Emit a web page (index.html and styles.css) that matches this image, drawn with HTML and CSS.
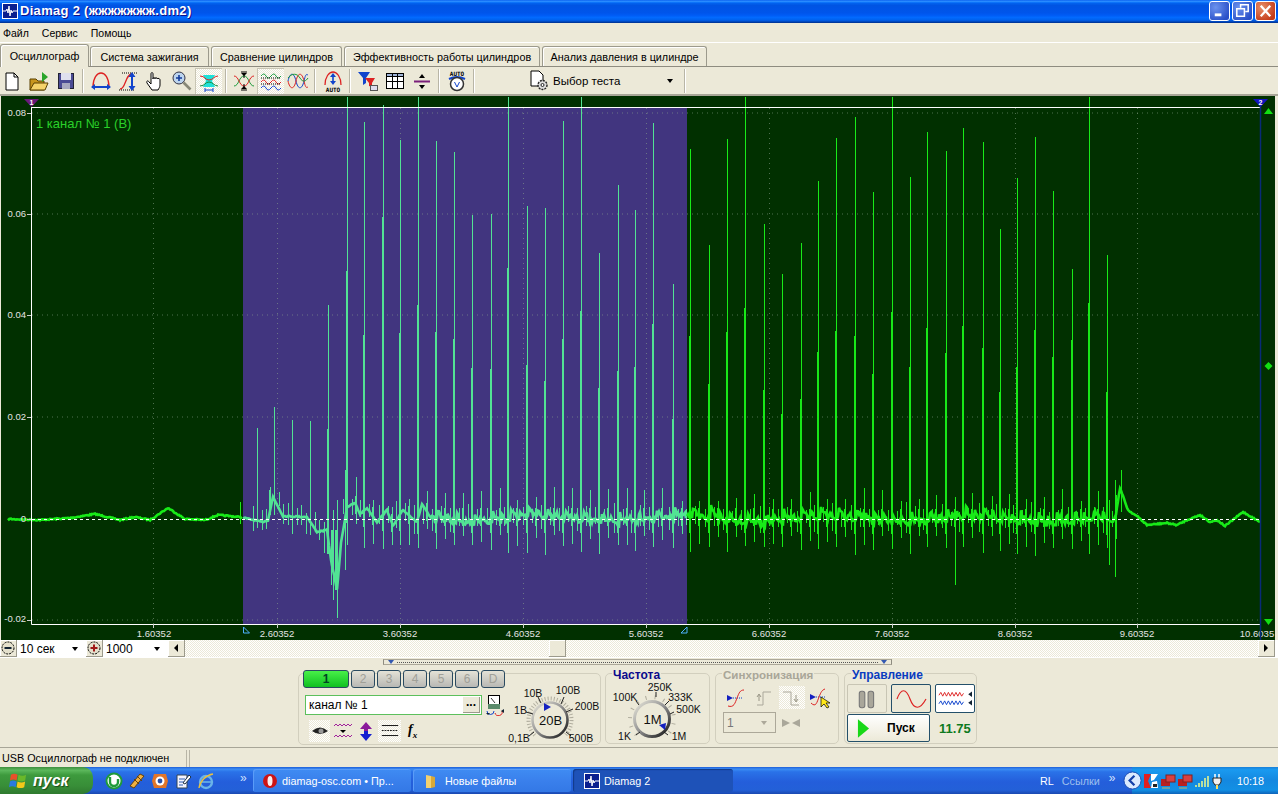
FILE: index.html
```html
<!DOCTYPE html>
<html lang="ru">
<head>
  <meta charset="UTF-8" />
  <title>Diamag 2</title>
  <link rel="stylesheet" href="styles.css">
</head>
<body>

  <!-- title bar -->
  <header class="titlebar">
    <svg class="app-icon" viewBox="0 0 16 16"><rect x="0.5" y="0.5" width="15" height="15" fill="#0a1f8f" stroke="#fff"/><path d="M1 8h3l1-2 1 4 1-7 1 10 1-6 1 3 1-2h4" fill="none" stroke="#fff"/></svg>
    <span class="title-text">Diamag 2 (жжжжжжж.dm2)</span>
    <div class="win-btns">
      <div class="win-btn"><svg viewBox="0 0 20 20"><rect x="5" y="12" width="7" height="3" fill="#fff"/></svg></div>
      <div class="win-btn"><svg viewBox="0 0 20 20"><path d="M8 6V3h8v7h-3M4 7h8v8H4z" fill="none" stroke="#fff" stroke-width="1.6"/></svg></div>
      <div class="win-btn close"><svg viewBox="0 0 20 20"><path d="M5 4l10 11M15 4L5 15" stroke="#fff" stroke-width="2.4"/></svg></div>
    </div>
  </header>

  <nav class="menu">
    <span>Файл</span>
    <span>Сервис</span>
    <span>Помощь</span>
  </nav>

  <div class="tabs">
    <div class="tab active t1">Осциллограф</div>
    <div class="tab t2">Система зажигания</div>
    <div class="tab t3">Сравнение цилиндров</div>
    <div class="tab t4">Эффективность работы цилиндров</div>
    <div class="tab t5">Анализ давления в цилиндре</div>
  </div>

  <div class="toolbar">
    <div class="tool"><svg viewBox="0 0 22 22"><path d="M5 3h8l4 4v13H5z" fill="#fff" stroke="#000"/><path d="M13 3v4h4" fill="none" stroke="#000"/></svg></div>
    <div class="tool"><svg viewBox="0 0 22 22"><path d="M2 9h6l2 2h6v9H2z" fill="#c8961e" stroke="#5a4000"/><path d="M6 13h14l-3 7H2z" fill="#f5d36a" stroke="#5a4000"/><path d="M14 2l6 5-6 5z" fill="#2aa52a"/></svg></div>
    <div class="tool"><svg viewBox="0 0 22 22"><rect x="3.500" y="3.500" width="15" height="15" fill="#4a4a94" stroke="#223"/><rect x="6" y="3" width="10" height="7" fill="#dfe0ee"/><rect x="7" y="13" width="8" height="6" fill="#a8a8c0"/></svg></div>
    <div class="sep"></div>
    <div class="tool"><svg viewBox="0 0 22 22"><path d="M3 17C3 8 7 3 11 3s8 5 8 14" fill="none" stroke="#d22" stroke-width="1.300"/><path d="M2 17h18" stroke="#14c" stroke-width="2"/><path d="M1 17l4-3v6zM21 17l-4-3v6z" fill="#14c"/></svg></div>
    <div class="tool"><svg viewBox="0 0 22 22"><path d="M3 19c6 0 5-15 12-15" fill="none" stroke="#d22" stroke-width="1.300"/><path d="M5 3h15M2 20h15" stroke="#000" stroke-dasharray="1 1"/><path d="M15 5v13" stroke="#14c" stroke-width="2"/><path d="M15 2l-3.500 5h7zM15 21l-3.500-5h7z" fill="#14c"/></svg></div>
    <div class="tool"><svg viewBox="0 0 22 22"><path d="M8 20l-5-7c-1-2 1-3 2-1l2 2V4c0-2 2-2 2 0v5c0-2 2-2 2 0 0-2 2-2 2 0 0-1 3-1 3 1v5c0 2-1 3-2 5z" fill="#fff" stroke="#000"/></svg></div>
    <div class="tool"><svg viewBox="0 0 22 22"><circle cx="8" cy="8" r="6" fill="#bcd4ee" stroke="#334"/><path d="M5 8h6M8 5v6" stroke="#123a9a" stroke-width="1.600"/><path d="M12.500 12.500l7 7" stroke="#887" stroke-width="2.600"/></svg></div>
    <div class="tool pressed"><svg viewBox="0 0 22 22"><path d="M5 5h12l-3 6 3 6H5l3-6z" fill="#1fe0d8"/><path d="M2 6c5 0 5 4 9 4s5-4 9-4" fill="none" stroke="#d22"/><path d="M2 16c5 0 5-4 9-4s5 4 9 4" fill="none" stroke="#1a8a3a"/><path d="M7 20h8M7 18v4M15 18v4" stroke="#14c"/></svg></div>
    <div class="sep"></div>
    <div class="tool"><svg viewBox="0 0 22 22"><path d="M1 16c5 0 5-10 10-10s5 10 10 10" fill="none" stroke="#1a9a3a"/><path d="M1 6c5 0 5 10 10 10s5-10 10-10" fill="none" stroke="#d22"/><path d="M11 8V3M8 2h6M11 14v5M8 20h6" stroke="#000"/><path d="M8 3h6l-3 3zM8 19h6l-3-3z"/></svg></div>
    <div class="tool pressed"><svg viewBox="0 0 22 22"><path d="M1 6q3-4 5 0t5 0 5 0 5 0" fill="none" stroke="#1a9a3a"/><path d="M1 8h20" stroke="#000" stroke-dasharray="1 1"/><path d="M1 12q3-4 5 0t5 0 5 0 5 0" fill="none" stroke="#d22"/><path d="M1 14h20" stroke="#000" stroke-dasharray="1 1"/><path d="M1 18q3-4 5 0t5 0 5 0 5 0" fill="none" stroke="#14c"/></svg></div>
    <div class="tool"><svg viewBox="0 0 22 22"><path d="M1 11c2-9 6-9 8 0s6 9 8 0 3-6 4-6" fill="none" stroke="#14c"/><path d="M1 11c2 9 6 9 8 0s6-9 8 0 3 6 4 6" fill="none" stroke="#d22"/><path d="M1 8c4-5 9-5 12 0s6 3 8 0" fill="none" stroke="#1a9a3a"/></svg></div>
    <div class="sep"></div>
    <div class="tool"><svg viewBox="0 0 22 22"><path d="M3 15C3 7 7 2 11 2s8 5 8 13" fill="none" stroke="#d22" stroke-width="1.300"/><path d="M11 6v7" stroke="#14c" stroke-width="1.600"/><path d="M11 3L8 7h6zM11 15l-3-4h6z" fill="#14c"/><text class="mini" x="11" y="21.500">AUTO</text></svg></div>
    <div class="sep"></div>
    <div class="tool"><svg viewBox="0 0 22 22"><path d="M1 2h12l-4 6v5l-3 2V8z" fill="#14c"/><path d="M8 8h10l-3 5v4l-3-1v-3z" fill="#d22"/><rect x="13.500" y="15.500" width="7" height="5" fill="#dde" stroke="#555"/></svg></div>
    <div class="tool"><svg viewBox="0 0 22 22"><rect x="2.500" y="3.500" width="17" height="15" fill="#fff" stroke="#000"/><rect x="2.500" y="3.500" width="17" height="3" fill="#9fb4d8" stroke="#000"/><path d="M8.500 4v14M13.500 4v14M3 11.500h16" stroke="#000"/></svg></div>
    <div class="tool"><svg viewBox="0 0 22 22"><path d="M3 11.500h16" stroke="#7a1f7a" stroke-width="2"/><path d="M11 4l-3 4h6zM11 19l-3-4h6z"/></svg></div>
    <div class="sep"></div>
    <div class="tool"><svg viewBox="0 0 22 22"><text class="mini" x="11" y="5.500">AUTO</text><path d="M3 9q8-4 16 0" fill="none" stroke="#14c" stroke-width="2"/><circle cx="11" cy="14" r="6.500" fill="#fff" stroke="#333" stroke-width="1.500"/><path d="M8.500 12l2.500 5 2.500-5" fill="none" stroke="#14c"/></svg></div>
    <div class="sep"></div>
    <div class="test-select">
      <svg class="test-icon" viewBox="0 0 20 22"><path d="M2 1h8l4 4v11H2z" fill="#fff" stroke="#000"/><circle cx="13.500" cy="15" r="4.500" fill="#ddd" stroke="#222" stroke-width="1.400" stroke-dasharray="2 1"/><circle cx="13.500" cy="15" r="1.500" fill="#fff" stroke="#222"/></svg>
      <span class="test-name">Выбор теста</span>
      <i class="caret"></i>
    </div>
    <div class="sep"></div>
  </div>

  <!-- oscilloscope -->
  <svg class="scope" id="scope" viewBox="0 96 1278 544">
    <rect x="1" y="96" width="1274" height="544" fill="#013000"/>
    <rect x="243" y="108" width="444" height="516" fill="#41357f"/>
    <g class="grid">
      <path d="M32 113H1260M32 214H1260M32 315H1260M32 417H1260M32 620H1260"/>
      <path d="M153.500 108V624M277.500 108V624M400.500 108V624M523.500 108V624M646.500 108V624M769.500 108V624M892.500 108V624M1015.500 108V624M1137.500 108V624"/>
    </g>
    <g id="wave"></g>
    <path class="zero" d="M32 519.500H1260"/>
    <path class="axis" d="M31.500 107V624.500H1260M31 107.500H1260"/>
    <path class="ticks" d="M27 113.500h4M27 214.500h4M27 315.500h4M27 417.500h4M27 519.500h4M27 620.500h4M153.500 624v4M277.500 624v4M400.500 624v4M523.500 624v4M646.500 624v4M769.500 624v4M892.500 624v4M1015.500 624v4M1137.500 624v4M1260.500 624v4"/>
    <g class="ylabels">
      <text x="26" y="116">0.08</text>
      <text x="26" y="217">0.06</text>
      <text x="26" y="318">0.04</text>
      <text x="26" y="420">0.02</text>
      <text x="26" y="522">0</text>
      <text x="26" y="622">-0.02</text>
    </g>
    <g class="xlabels">
      <text x="154" y="637">1.60352</text>
      <text x="277" y="637">2.60352</text>
      <text x="400" y="637">3.60352</text>
      <text x="523" y="637">4.60352</text>
      <text x="646" y="637">5.60352</text>
      <text x="769" y="637">6.60352</text>
      <text x="892" y="637">7.60352</text>
      <text x="1015" y="637">8.60352</text>
      <text x="1137" y="637">9.60352</text>
      <text x="1257" y="637">10.6035</text>
    </g>
    <text class="chan-label" x="36" y="128">1 канал № 1 (В)</text>
    <path d="M1260.500 100V640" stroke="#0a2a78" stroke-width="1.500"/>
    <path d="M24 99h15l-7.500 8z" fill="#6a1a7a"/>
    <text class="marker" x="31.500" y="105">1</text>
    <path d="M1253 99h15l-7.500 8z" fill="#1414c0"/>
    <text class="marker" x="1260.500" y="105">2</text>
    <path d="M1268.500 108l4.500 6h-9zM1268.500 625l4.500-6h-9zM1268.500 362l4 4-4 4-4-4z" fill="#12e012"/>
    <path d="M243.500 627v6h6zM687 627v6h-6z" fill="none" stroke="#4fb0ff"/>
  </svg>

  <div class="scrollrow">
    <div class="round-btn"><svg viewBox="0 0 16 16"><circle cx="8" cy="8" r="6" fill="#e4e0cc" stroke="#000" stroke-dasharray="2 1"/><path d="M4.500 8h7" stroke="#123" stroke-width="2"/></svg></div>
    <div class="combo c-time"><span>10 сек</span><i class="caret"></i></div>
    <div class="round-btn"><svg viewBox="0 0 16 16"><circle cx="8" cy="8" r="6" fill="#e4e0cc" stroke="#000" stroke-dasharray="2 1"/><path d="M4.500 8h7M8 4.500v7" stroke="#a01818" stroke-width="2"/></svg></div>
    <div class="combo c-points"><span>1000</span><i class="caret"></i></div>
    <div class="sb-btn"><i class="arrow-left"></i></div>
    <div class="sb-track"><div class="sb-thumb"></div></div>
    <div class="sb-btn"><i class="arrow-right"></i></div>
  </div>

  <section class="controls">
    <div class="splitter"><i class="down-tri"></i><span class="dots"></span><i class="down-tri"></i></div>
    <div class="groups">

      <div class="group g-channel">
        <div class="chan-left">
          <div class="chan-tabs">
            <div class="chan on">1</div>
            <div class="chan">2</div>
            <div class="chan">3</div>
            <div class="chan">4</div>
            <div class="chan">5</div>
            <div class="chan">6</div>
            <div class="chan">D</div>
          </div>
          <div class="chan-name">
            <div class="name-input"><span>канал № 1</span><div class="dots-btn">...</div></div>
            <svg class="meter" viewBox="0 0 20 22"><rect x="3.500" y="1.500" width="11" height="13" fill="#fff" stroke="#000"/><rect x="3" y="10" width="12" height="5" fill="#5a8a6a"/><path d="M6 4l4 5" stroke="#333"/><path d="M2 17a3 3 0 0 0 7 0" fill="none" stroke="#14c"/><path d="M10 19a3 3 0 0 0 7-2" fill="none" stroke="#d22"/><path d="M1 19h4l-2 2zM16 17l3-2v4z" fill="#123"/></svg>
          </div>
          <div class="chan-icons">
            <div class="c-icon sel"><svg viewBox="0 0 20 20"><path d="M2 10q8-7 16 0-8 6-16 0z" fill="#222"/><circle cx="11" cy="10" r="2.500" fill="#999"/></svg></div>
            <div class="c-icon"><svg viewBox="0 0 20 20"><path d="M1 5l2-2 2 2 2-2 2 2 2-2 2 2 2-2 2 2 2-2" fill="none" stroke="#a0209a"/><path d="M7 9h6l-3 3z"/><path d="M1 16l2-2 2 2 2-2 2 2 2-2 2 2 2-2 2 2 2-2" fill="none" stroke="#a0209a"/></svg></div>
            <div class="c-icon"><svg viewBox="0 0 20 20"><path d="M10 1l6 7h-4v2H8V8H4z" fill="#8a1a9a"/><path d="M10 20l6-7h-4v-3H8v3H4z" fill="#1420d0"/></svg></div>
            <div class="c-icon sel wide"><svg viewBox="0 0 22 20"><path d="M2 4h18M2 15h18" stroke="#000"/><path d="M2 9.500h18" stroke="#000" stroke-dasharray="2 1"/></svg></div>
            <span class="fx">f<sub>x</sub></span>
          </div>
        </div>
        <svg class="dial d-volt" viewBox="505 676 95 69">
          <path class="dial-ticks" d="M534.800 735.200A21.500 21.500 0 1 1 565.200 735.200"/>
          <circle cx="550" cy="720" r="17.500" fill="none" stroke="url(#ringGrad)" stroke-width="2.600"/>
          <path class="major" d="M541 703l-3-6M561 704l3-7M566 712l7-3M533 714l-7-2M534 732l-5 4M566 732l5 4"/>
          <path d="M544 703l7 4-7 4z" fill="#1420c0"/>
          <text class="dial-val" x="550.500" y="725">20В</text>
          <text x="533" y="697">10В</text>
          <text x="568" y="694">100В</text>
          <text x="587" y="710">200В</text>
          <text x="520.500" y="714">1В</text>
          <text x="519" y="742">0,1В</text>
          <text x="581" y="742">500В</text>
        </svg>
      </div>

      <fieldset class="group g-freq">
        <legend class="navy">Частота</legend>
        <svg class="dial d-freq" viewBox="607 680 100 64">
          <path class="dial-ticks sparse" d="M637.400 735.600A22 22 0 1 1 668.600 735.600"/>
          <circle cx="653" cy="720" r="17.500" fill="none" stroke="url(#ringGrad)" stroke-width="3"/>
          <path class="major" d="M640 706l-3-4M657 698v-5M666 706l4-4M671 715l4-2M641 733l-4 3M665 733l4 3"/>
          <path d="M660 726l7-2-1 7z" fill="#1420c0"/>
          <text class="dial-val" x="653.500" y="725">1M</text>
          <text x="626" y="702">100K</text>
          <text x="661" y="692">250K</text>
          <text x="681.500" y="702">333K</text>
          <text x="689.500" y="714">500K</text>
          <text x="625.500" y="741">1K</text>
          <text x="680" y="741">1M</text>
        </svg>
      </fieldset>

      <fieldset class="group g-sync">
        <legend class="muted">Синхронизация</legend>
        <div class="sync-row">
          <div class="s-icon"><svg viewBox="0 0 22 22"><path d="M2 8l6 3-6 3z" fill="#1420c0"/><path d="M8 11h10" stroke="#14c" stroke-dasharray="1 1"/><path d="M3 19c6 2 7-3 9-8s3-8 7-8" fill="none" stroke="#d22"/></svg></div>
          <div class="s-icon"><svg viewBox="0 0 22 22"><path d="M4 18h6V5h8" fill="none" stroke="#aaa79a"/><path d="M6 14V8M4 10l2-3 2 3" fill="none" stroke="#999686"/></svg></div>
          <div class="s-icon pressed"><svg viewBox="0 0 22 22"><path d="M2 5h8v13h8" fill="none" stroke="#aaa79a"/><path d="M15 8v6M13 12l2 3 2-3" fill="none" stroke="#999686"/></svg></div>
          <div class="s-icon"><svg viewBox="0 0 22 22"><path d="M1 7l6 3-6 3z" fill="#1420c0"/><path d="M7 10h10" stroke="#14c" stroke-dasharray="1 1"/><path d="M2 16c5 5 6-1 8-6s3-7 6-8" fill="none" stroke="#d22"/><path d="M12 10v10l3-3 3 4 2-1-3-4h4z" fill="#ffe81a" stroke="#000" stroke-width=".7"/></svg></div>
        </div>
        <div class="sync-row second">
          <div class="sync-combo"><span>1</span><i class="caret gray"></i></div>
          <svg class="sync-join" viewBox="0 0 20 10"><path d="M1 1l8 4-8 4zM19 1l-8 4 8 4z" fill="#aaa79a"/></svg>
        </div>
      </fieldset>

      <fieldset class="group g-run">
        <legend class="blue">Управление</legend>
        <div class="run-row">
          <div class="run-btn flat"><svg viewBox="0 0 20 20"><rect x="3" y="3" width="5" height="15" rx="2" fill="#a9a69a" stroke="#777"/><rect x="11" y="3" width="5" height="15" rx="2" fill="#a9a69a" stroke="#777"/></svg></div>
          <div class="run-btn"><svg viewBox="0 0 34 22"><path d="M2 11C6 0 11 0 15 11s10 11 16 0" fill="none" stroke="#d22" stroke-width="1.200" transform="translate(1)"/></svg></div>
          <div class="run-btn on"><svg viewBox="0 0 36 22"><path d="M1 7l2-3 2 4 2-4 2 4 2-4 2 4 2-4 2 4 2-4 2 4 2-4 2 4 2-3" fill="none" stroke="#d22"/><path d="M1 16l2-3 2 4 2-4 2 4 2-4 2 4 2-4 2 4 2-4 2 4 2-4 2 4 2-3" fill="none" stroke="#14c"/><path d="M36 3l-4 3 4 3zM36 12l-4 3 4 3z" fill="#123"/></svg></div>
        </div>
        <div class="run-row second">
          <div class="start-btn"><svg viewBox="0 0 14 22"><path d="M1 1l12 10L1 21z" fill="#18d818"/></svg><span>Пуск</span></div>
          <span class="volt">11.75</span>
        </div>
      </fieldset>
    </div>
    <!-- shared gradient for dial rings -->
    <svg class="defs"><defs><linearGradient id="ringGrad" x1="0" y1="0" x2="1" y2="1"><stop offset="0" stop-color="#e8e6da"/><stop offset=".45" stop-color="#999"/><stop offset="1" stop-color="#111"/></linearGradient></defs></svg>
  </section>

  <footer class="statusbar">
    <div class="status-main">USB Осциллограф не подключен</div>
    <div class="status-rest"></div>
  </footer>

  <div class="taskbar">
    <div class="start">
      <svg class="flag" viewBox="0 0 20 20"><path d="M2 4q4-2 7 0l-1 6q-3-2-7 0z" fill="#e8502a"/><path d="M10 4q4 2 8 0l-1 6q-4 2-8 0z" fill="#6ab82a"/><path d="M1 11q3-2 7 0l-1 6q-4-2-7 0z" fill="#2a7ae0"/><path d="M9 11q4 2 8 0l-1 6q-4 2-8 0z" fill="#f4c81a"/></svg>
      <span>пуск</span>
    </div>
    <div class="quick">
      <svg viewBox="0 0 18 18"><circle cx="9" cy="9" r="7.500" fill="#fff" stroke="#1f9a3a" stroke-width="2"/><path d="M5 5v5a4 4 0 0 0 8 0V7" fill="none" stroke="#1f9a3a" stroke-width="2.400"/></svg>
      <svg viewBox="0 0 18 18"><path d="M2 14L12 2l4 2L6 16z" fill="#f0b040" stroke="#604010"/><path d="M6 7l5 5M9 4l5 5" stroke="#604010"/></svg>
      <svg viewBox="0 0 18 18"><path d="M3 2h12l2 7-2 7H3L1 9z" fill="#e0752a"/><circle cx="9" cy="9" r="4.500" fill="#fff"/><circle cx="9" cy="9" r="2.400" fill="#2a50a8"/></svg>
      <svg viewBox="0 0 18 18"><path d="M3 3h10v13H3z" fill="#f4f4ff" stroke="#345"/><path d="M5 7h6M5 10h6M5 13h4" stroke="#2a5ab0"/><path d="M9 11l6-8 2 2-6 7z" fill="#fff" stroke="#234"/></svg>
      <svg viewBox="0 0 18 18"><circle cx="9" cy="10" r="6" fill="none" stroke="#6ab4e8" stroke-width="2.400"/><path d="M4 10h10" stroke="#6ab4e8" stroke-width="1.600"/><path d="M2 16C3 9 9 3 16 2" fill="none" stroke="#e8c040" stroke-width="1.400"/></svg>
    </div>
    <span class="more m1">»</span>
    <div class="task t-opera">
      <svg viewBox="0 0 16 16"><circle cx="8" cy="8" r="7" fill="#cc1414"/><ellipse cx="8" cy="8" rx="2.500" ry="5" fill="#fbeeee"/></svg>
      <span>diamag-osc.com • Пр...</span>
    </div>
    <div class="task t-folder">
      <svg viewBox="0 0 16 16"><path d="M3 2l5 1v12H3z" fill="#f2d070"/><path d="M8 3l4 1v10l-4 1z" fill="#d8a838"/></svg>
      <span>Новые файлы</span>
    </div>
    <div class="task t-app current">
      <svg viewBox="0 0 16 16"><rect x="0.500" y="0.500" width="15" height="15" fill="#0a1f8f" stroke="#fff"/><path d="M1 8h3l1-2 1 4 1-7 1 10 1-6 1 3 1-2h4" fill="none" stroke="#fff"/></svg>
      <span>Diamag 2</span>
    </div>
    <div class="links">
      <span class="lang">RL</span>
      <span class="link-txt">Ссылки</span>
      <span class="more">»</span>
    </div>
    <div class="tray">
      <svg class="tray-back" viewBox="0 0 20 20"><circle cx="10" cy="10" r="9" fill="#dbeafe" stroke="#1a4ab0"/><path d="M12 5l-5 5 5 5" fill="none" stroke="#1440a8" stroke-width="2.400"/></svg>
      <svg viewBox="0 0 16 16"><path d="M1 1h7l-3 7 3 7H1z" fill="#e02020"/><path d="M8 1h7l-4 6-3 1zM9 9l5-1 1 7H8z" fill="#fff"/><path d="M10 11h4v3h-4z" fill="#222"/></svg>
      <svg viewBox="0 0 16 16"><rect x="1" y="6" width="9" height="7" fill="#b82020"/><rect x="6" y="2" width="9" height="7" fill="#d84040" stroke="#802020"/><path d="M2 15h8" stroke="#c8b060"/></svg>
      <svg viewBox="0 0 16 16"><rect x="1" y="6" width="9" height="7" fill="#b82020"/><rect x="6" y="2" width="9" height="7" fill="#d84040" stroke="#802020"/><path d="M2 15h8" stroke="#c8b060"/></svg>
      <svg viewBox="0 0 16 16"><path d="M2 14v-2M5 14v-4M8 14V8M11 14V5M14 14V3" stroke-width="2" stroke="#b8e0a0"/></svg>
      <svg viewBox="0 0 16 16"><path d="M4 1v4M8 1v4" stroke="#fff" stroke-width="1.500"/><path d="M2 5h8v4l-2 3H4L2 9z" fill="#f0f0f0" stroke="#222"/><path d="M6 12v4" stroke="#ffe060" stroke-width="2"/></svg>
      <span class="clock">10:18</span>
    </div>
  </div>

  <script src="plot.js"></script>
</body>
</html>
```

FILE: styles.css
```css
* {
  box-sizing: border-box;
}

body {
  margin: 0;
  width: 1278px;
  height: 794px;
  overflow: hidden;
  display: flex;
  flex-direction: column;
  background: #ece9d8;
  color: #000;
  font-family: "Liberation Sans", Arial, sans-serif;
  font-size: 10.800px;
}

svg {
  display: block;
}

/* title bar */
.titlebar {
  height: 23px;
  flex: none;
  display: flex;
  align-items: center;
  padding: 0 2px 2px 2px;
  color: #fff;
  background: linear-gradient(#0058ee 0, #3593ff 5%, #127dff 9%, #0262ee 14%, #0054e3 24%, #0055eb 56%, #005bf5 66%, #026afe 76%, #0062ef 86%, #0052d6 92%, #0040ab 95%, #003092 100%);
}

.app-icon {
  width: 16px;
  height: 16px;
}

.title-text {
  margin-left: 2px;
  font-size: 13px;
  font-weight: bold;
  letter-spacing: 0.3px;
  text-shadow: 1px 1px 0 #0f1089;
}

.win-btns {
  margin-left: auto;
  display: flex;
  gap: 2px;
  margin-top: 1px;
}

.win-btn {
  width: 21px;
  height: 20px;
  border: 1px solid #fff;
  border-radius: 3px;
  background: radial-gradient(circle at 30% 30%, #6b92ee, #2a50c8 80%);
}

.win-btn.close {
  background: radial-gradient(circle at 30% 30%, #e8906a, #c43a18 80%);
}

/* menu and tabs */
.menu {
  height: 20px;
  flex: none;
  display: flex;
  align-items: center;
  gap: 13px;
  padding-left: 3px;
  border-bottom: 1px solid #fff;
  font-size: 10.500px;
}

.tabs {
  height: 24px;
  flex: none;
  display: flex;
  align-items: flex-end;
  border-bottom: 1px solid #8e8c80;
}

.tab {
  height: 20px;
  margin-left: 2px;
  border: 1px solid #9c9a8c;
  border-bottom: none;
  border-radius: 3px 3px 0 0;
  background: #ece9d8;
  box-shadow: inset 1px 1px 0 #fff;
  display: flex;
  align-items: center;
  justify-content: center;
  white-space: nowrap;
}

.tab.active {
  height: 23px;
  margin-left: 0;
  margin-bottom: -1px;
  position: relative;
}

.t1 { width: 89px; }
.t2 { width: 119px; margin-left: 1px; }
.t3 { width: 131px; }
.t4 { width: 196px; }
.t5 { width: 165px; }

/* toolbar */
.toolbar {
  height: 29px;
  flex: none;
  display: flex;
  align-items: center;
  padding-left: 0;
  border-bottom: 2px solid #a8a698;
}

.tool {
  width: 27px;
  height: 26px;
  display: flex;
  align-items: center;
  justify-content: center;
}

.tool:first-child {
  margin-left: -2px;
}

.tool svg {
  width: 22px;
  height: 22px;
}

.tool.pressed {
  background: repeating-conic-gradient(#ece9d8 0 25%, #fff 0 50%) 0 0/2px 2px;
  box-shadow: inset 1px 1px 0 #c8c5b4;
}

.sep {
  width: 2px;
  height: 24px;
  margin: 0 3px 0 3px;
  border-left: 1px solid #b8b5a6;
  border-right: 1px solid #fff;
}

.mini {
  font-family: "DejaVu Sans Mono", monospace;
  font-size: 6px;
  font-weight: bold;
  text-anchor: middle;
}

.test-select {
  width: 152px;
  margin-left: 51px;
  display: flex;
  align-items: center;
}

.test-icon {
  width: 20px;
  height: 22px;
}

.test-name {
  margin-left: 4px;
  font-size: 11.500px;
}

.caret {
  width: 0;
  height: 0;
  border: 3px solid transparent;
  border-top: 4px solid #000;
  border-bottom: none;
}

.test-select .caret {
  margin-left: auto;
  margin-right: 8px;
}

/* scope */
.scope {
  width: 1278px;
  height: 544px;
  flex: none;
}

.grid path {
  fill: none;
  stroke: #8ea88e;
  stroke-opacity: 0.55;
  stroke-dasharray: 1 4;
}

.zero {
  fill: none;
  stroke: #fff;
  stroke-dasharray: 3 3;
}

.axis {
  fill: none;
  stroke: #fff;
}

.ticks {
  fill: none;
  stroke: #ccc;
}

.ylabels text {
  fill: #e4e4e4;
  font-size: 9.500px;
  text-anchor: end;
}

.xlabels text {
  fill: #e4e4e4;
  font-size: 9.500px;
  text-anchor: middle;
}

.chan-label {
  fill: #2ad02a;
  font-size: 13px;
}

.marker {
  fill: #fff;
  font-size: 7px;
  font-weight: bold;
  text-anchor: middle;
}

/* scroll row */
.scrollrow {
  height: 18px;
  flex: none;
  display: flex;
  background: #fff;
  border-bottom: 1px solid #fff;
}

.round-btn {
  width: 17px;
  height: 17px;
  background: #ece9d8;
  border-right: 1px solid #9c9a8c;
  border-bottom: 1px solid #9c9a8c;
  box-shadow: inset 1px 1px 0 #fff;
}

.combo {
  height: 17px;
  display: flex;
  align-items: center;
  padding: 0 8px 0 3px;
  font-size: 12px;
}

.combo .caret {
  margin-left: auto;
}

.c-time { width: 69px; }
.c-points { width: 65px; }

.sb-btn {
  width: 17px;
  height: 17px;
  flex: none;
  display: flex;
  align-items: center;
  justify-content: center;
  background: #ece9d8;
  border-right: 1px solid #9c9a8c;
  border-bottom: 1px solid #9c9a8c;
  box-shadow: inset 1px 1px 0 #fff;
}

.arrow-left {
  border: 4px solid transparent;
  border-right: 4px solid #000;
  border-left: none;
}

.arrow-right {
  border: 4px solid transparent;
  border-left: 4px solid #000;
  border-right: none;
}

.sb-track {
  width: 1073px;
  height: 17px;
  flex: none;
  background: repeating-conic-gradient(#ece9d8 0 25%, #fff 0 50%) 0 0/2px 2px;
}

.sb-thumb {
  width: 17px;
  height: 17px;
  margin-left: 364px;
  background: #ece9d8;
  border-right: 1px solid #9c9a8c;
  border-bottom: 1px solid #9c9a8c;
  box-shadow: inset 1px 1px 0 #fff;
}

/* bottom controls */
.controls {
  height: 89px;
  flex: none;
  padding-top: 1px;
}

.splitter {
  width: 509px;
  height: 6px;
  margin-left: 383px;
  display: flex;
  align-items: center;
  padding: 0 4px;
  border: 1px solid #aca899;
  border-left-color: #8e8c80;
  border-right-color: #8e8c80;
}

.dots {
  flex: 1;
  margin: 0 3px;
  border-top: 1px dotted #555;
}

.down-tri {
  border: 3px solid transparent;
  border-top: 4px solid #3358b0;
  border-bottom: none;
}

.groups {
  display: flex;
  gap: 4px;
  padding-left: 298px;
  margin-top: 2px;
  align-items: flex-start;
}

.group {
  margin: 0;
  padding: 0;
  border: 1px solid #d2cfbe;
  border-radius: 5px;
  min-width: 0;
}

fieldset.group {
  height: 77px;
  margin-top: 0;
}

legend {
  padding: 0 1px;
  margin-left: 6px;
  font-size: 12px;
  font-weight: bold;
  line-height: 12px;
  transform: translateY(2px);
}

.navy { color: #0a0a8c; }
.blue { color: #0a3cc0; }
.muted { color: #a9a698; font-size: 11.600px; }

.g-channel {
  width: 303px;
  height: 72px;
  margin-top: 6px;
  display: flex;
}

.chan-left {
  width: 206px;
  flex: none;
  margin-top: -4px;
  padding-left: 4px;
}

.chan-tabs {
  display: flex;
  gap: 2px;
}

.chan {
  width: 25px;
  height: 18px;
  border: 1px solid #2a4a60;
  border-radius: 3px;
  background: linear-gradient(#e4e2d6, #b8b8b4);
  color: #a0a098;
  font-size: 12px;
  text-align: center;
  line-height: 16px;
}

.chan.on {
  width: 48px;
  background: linear-gradient(#48f048, #10c020);
  color: #042;
  font-weight: bold;
}

.chan-name {
  display: flex;
  align-items: center;
  margin-top: 6px;
  padding-left: 2px;
}

.name-input {
  width: 177px;
  height: 20px;
  flex: none;
  background: #fff;
  border: 1px solid #5cc05c;
  display: flex;
  align-items: center;
  padding-left: 3px;
  font-size: 12px;
}

.dots-btn {
  width: 17px;
  height: 16px;
  margin-left: auto;
  margin-right: 1px;
  background: #ece9d8;
  border-right: 1px solid #9c9a8c;
  border-bottom: 1px solid #9c9a8c;
  font-weight: bold;
  line-height: 10px;
  text-align: center;
}

.meter {
  width: 20px;
  height: 22px;
  flex: none;
  margin-left: 3px;
}

.chan-icons {
  display: flex;
  align-items: center;
  gap: 2px;
  margin-top: 4px;
  padding-left: 6px;
}

.c-icon {
  width: 21px;
  height: 22px;
  display: flex;
  align-items: center;
  justify-content: center;
}

.c-icon svg {
  width: 20px;
  height: 20px;
}

.c-icon.sel {
  background: repeating-conic-gradient(#ece9d8 0 25%, #fff 0 50%) 0 0/2px 2px;
}

.c-icon.wide {
  width: 23px;
}

.fx {
  margin-left: 5px;
  font-family: "Liberation Serif", serif;
  font-size: 14px;
  font-style: italic;
  font-weight: bold;
}

.fx sub {
  font-size: 9px;
}

.dial text {
  font-size: 10.500px;
  text-anchor: middle;
  fill: #111;
}

.dial .dial-val {
  font-size: 13px;
}

.d-volt {
  width: 95px;
  height: 69px;
  flex: none;
  margin-top: 2px;
}

.d-freq {
  width: 100px;
  height: 64px;
}

.dial-ticks {
  fill: none;
  stroke: #b0ad9e;
  stroke-width: 4;
  stroke-dasharray: 1 2;
}

.dial-ticks.sparse {
  stroke-dasharray: 1 8;
}

.major {
  fill: none;
  stroke: #222;
}

.g-freq { width: 105px; }
.g-sync { width: 124px; margin-left: 1px; padding: 7px 0 0 7px; }
.g-sync legend { margin-left: -1px; }
.g-run { width: 133px; margin-left: 1px; padding: 5px 0 0 2px; }
.g-run legend { margin-left: 4px; }

.sync-row {
  display: flex;
  gap: 2px;
}

.s-icon {
  width: 26px;
  height: 23px;
  display: flex;
  align-items: center;
  justify-content: center;
}

.s-icon svg {
  width: 22px;
  height: 22px;
}

.s-icon.pressed {
  background: repeating-conic-gradient(#ece9d8 0 25%, #fff 0 50%) 0 0/2px 2px;
}

.sync-row.second {
  align-items: center;
  gap: 5px;
  margin-top: 3px;
}

.sync-combo {
  width: 53px;
  height: 21px;
  display: flex;
  align-items: center;
  padding: 0 8px 0 3px;
  border: 1px solid #aca899;
  color: #777;
  font-size: 12px;
}

.sync-combo .caret {
  margin-left: auto;
}

.caret.gray {
  border-top-color: #aca899;
}

.sync-join {
  width: 20px;
  height: 10px;
}

.run-row {
  display: flex;
  gap: 4px;
}

.run-row.second {
  margin-top: 1px;
  align-items: center;
}

.run-btn {
  width: 40px;
  height: 29px;
  display: flex;
  align-items: center;
  justify-content: center;
  border: 1px solid #24506a;
  border-radius: 2px;
}

.run-btn.flat {
  border-color: #c8c5b4;
}

.run-btn.on {
  background: #fff;
}

.run-btn svg {
  width: 34px;
  height: 22px;
}

.start-btn {
  width: 83px;
  height: 28px;
  display: flex;
  align-items: center;
  padding-left: 9px;
  border: 1px solid #24506a;
  border-radius: 2px;
  background: linear-gradient(#fff, #ece9d8);
  font-size: 12px;
  font-weight: bold;
}

.start-btn svg {
  width: 13px;
  height: 21px;
}

.start-btn span {
  margin-left: 17px;
}

.volt {
  margin-left: 5px;
  color: #0e7a1e;
  font-size: 13px;
  font-weight: bold;
}

.defs {
  width: 0;
  height: 0;
}

/* status bar */
.statusbar {
  height: 20px;
  flex: none;
  display: flex;
  border-top: 1px solid #a8a698;
  padding-top: 2px;
}

.status-main {
  width: 187px;
  padding-left: 2px;
  border-right: 1px solid #b8b5a6;
  line-height: 16px;
  white-space: nowrap;
}

.status-rest {
  flex: 1;
  margin-left: 2px;
  border-left: 1px solid #b8b5a6;
}

/* taskbar */
.taskbar {
  height: 27px;
  flex: none;
  display: flex;
  align-items: center;
  color: #fff;
  background: linear-gradient(#1f5fd8 0, #3a8cf4 8%, #2a72e8 18%, #245edb 55%, #2360d8 85%, #1a48b0 100%);
}

.start {
  width: 93px;
  height: 27px;
  flex: none;
  display: flex;
  align-items: center;
  padding-left: 9px;
  border-radius: 0 10px 10px 0;
  background: linear-gradient(#3f8f3f 0, #5cb85c 12%, #3d9a3d 30%, #388e38 70%, #2f7a2f 100%);
}

.start .flag {
  width: 19px;
  height: 19px;
}

.start span {
  margin-left: 5px;
  font-size: 16px;
  font-weight: bold;
  font-style: italic;
  text-shadow: 1px 1px 1px #1a4a1a;
}

.quick {
  display: flex;
  gap: 5px;
  margin-left: 12px;
  flex: none;
  width: 110px;
}

.quick svg {
  width: 18px;
  height: 18px;
}

.more {
  font-size: 12px;
  color: #cfe0ff;
}

.m1 {
  width: 13px;
  flex: none;
  margin: -6px 0 0 25px;
}

.task {
  height: 23px;
  flex: none;
  display: flex;
  align-items: center;
  gap: 4px;
  border-radius: 3px;
  background: linear-gradient(#3f8cf3, #3a80ec 50%, #3378e6);
  box-shadow: inset 1px 1px 0 #5a9cf8;
}

.task svg {
  width: 16px;
  height: 16px;
}

.t-opera { width: 158px; padding-left: 9px; }
.t-folder { width: 158px; margin-left: 2px; padding-left: 10px; }
.t-folder svg { margin-right: 2px; }
.t-app { width: 160px; margin-left: 2px; padding-left: 11px; }

.task.current {
  background: #1e52b8;
  box-shadow: inset 1px 1px 1px #123a88;
}

.links {
  width: 399px;
  flex: none;
  display: flex;
  align-items: center;
  padding-left: 307px;
}

.lang {
  color: #fff;
}

.link-txt {
  margin-left: 8px;
  color: #9fc0ee;
}

.links .more {
  margin: -6px 0 0 9px;
}

.tray {
  flex: 1;
  height: 27px;
  display: flex;
  align-items: center;
  gap: 1px;
  background: linear-gradient(#1a80d8 0, #1a9af0 10%, #1488e0 50%, #1290e4 85%, #0e62b8 100%);
}

.tray svg {
  width: 16px;
  height: 16px;
}

.tray .tray-back {
  width: 19px;
  height: 19px;
  margin-left: -9px;
}

.clock {
  margin-left: 9px;
}
```

FILE: plot.js
```js
// x, top of the thin spike, top of the thick lower part (0 = none)
const spikes = [
  [257,428,0],[274,407,0],[292,420,0],[310,421,0],[328,305,429],[347,97,271],[364,122,335],[383,105,217],
  [400,140,333],[418,97,305],[436,141,332],[454,152,339],[472,215,368],[491,214,369],[508,97,268],[527,206,365],
  [545,208,381],[563,121,339],[581,97,311],[599,253,388],[618,185,371],[635,210,367],[653,123,324],[673,284,419],
  [690,149,336],[709,245,384],[727,139,332],[745,97,308],[764,224,390],[782,274,414],[801,243,399],[818,181,352],
  [836,138,331],[855,117,336],[873,192,374],[892,97,312],[910,177,367],[927,132,328],[946,151,353],[963,128,326],
  [983,142,348],[1000,229,392],[1017,178,367],[1035,137,330],[1053,191,357],[1072,269,340],[1089,97,303],[1107,255,392]
];

// slow part of the signal
const curve = [
  [8,519],[40,520],[70,518],[95,514],[120,520],[135,517],[150,520],[168,508],[185,519],[205,520],[218,515],
  [240,517],[262,522],[268,520],[273,497],[283,516],[307,517],[317,532],[327,530],[331,560],[337,590],[341,543],
  [347,507],[355,503],[360,514],[367,508],[377,522],[387,510],[393,526],[403,510],[417,522],[422,504],[430,517],
  [1105,518],[1113,522],[1116,514],[1120,488],[1128,510],[1138,517],[1147,525],[1167,523],[1177,525],[1187,520],
  [1200,515],[1210,522],[1217,520],[1225,526],[1243,512],[1260,522]
];

let seed = 7;
function rnd() {
  seed = (seed * 16807) % 2147483647;
  return seed / 2147483647;
}

function slow(x) {
  for (let i = 1; i < curve.length; i++) {
    if (x <= curve[i][0]) {
      const a = curve[i - 1], b = curve[i];
      return a[1] + (b[1] - a[1]) * (x - a[0]) / (b[0] - a[0]);
    }
  }
  return 522;
}

// jump up after each firing, sag until the next one
function noisy(x) {
  if (x > 430 && x < 1105) {
    const phase = (x - 347) % 18.2;
    let y = slow(x) + 4 - 12 * Math.exp(-phase / 4) + 3 * Math.sin(x / 23) + (rnd() - 0.5) * 6;
    if (phase > 9) y -= 6 * Math.exp(-(phase - 9) / 3);
    return y;
  }
  return slow(x) + (rnd() - 0.5) * 1.2;
}

const purple = { line: "", thin: "", thick: "" };
const green = { line: "", thin: "", thick: "" };
const zone = x => (x >= 243 && x < 687 ? purple : green);

// slow line, cut into zones
let prev = null;
for (let x = 8; x <= 1260; x++) {
  const y = noisy(x).toFixed(1);
  const z = zone(x);
  z.line += (prev === z ? "L" : "M") + x + " " + y;
  prev = z;
}

spikes.forEach(([x, top, thick]) => {
  const z = zone(x);
  const base = slow(x) - 2;
  const depth = x < 345 ? 8 + rnd() * 14 : 30 + rnd() * 10;
  z.thin += `M${x + 0.5} ${top}V${base + depth}`;
  if (thick) z.thick += `M${x} ${thick}V${base + 18}`;

  // smaller spike half way to the next one
  const mx = x + 9;
  const mz = zone(mx);
  const up = x < 345 ? 12 : 16 + rnd() * 14;
  const down = x < 345 ? 8 : 16 + rnd() * 14;
  mz.thin += `M${mx + 0.5} ${slow(mx) - up}V${slow(mx) + down}`;
  if (x >= 345) mz.thick += `M${mx} ${slow(mx) - 9}V${slow(mx) + 9}`;
  zone(x - 4).thin += `M${x - 3.5} ${base - 4 - rnd() * 10}V${base + 8 + rnd() * 10}`;
  zone(x + 5).thin += `M${x + 5.5} ${base - 4 - rnd() * 6}V${base + 6 + rnd() * 6}`;
});

// the few deep ones
purple.thin += "M337.5 500V618M345.5 470V570M333.5 510V600M331.5 530V585";
purple.thick += "M336 530V590M332 530V570M270 490V515";
green.thin += "M955.5 510V585M1115.5 480V577M1109.5 500V565M1121.5 470V512M240.5 502V524";

const colours = [[purple, "#52e394"], [green, "#18ea18"]];
let out = "";
colours.forEach(([z, colour]) => {
  out += `<path d="${z.thin}" fill="none" stroke="${colour}" stroke-width="1" shape-rendering="crispEdges"/>`;
  out += `<path d="${z.thick}" fill="none" stroke="${colour}" stroke-width="2" shape-rendering="crispEdges"/>`;
  out += `<path d="${z.line}" fill="none" stroke="${colour}" stroke-width="2.6"/>`;
});
document.getElementById("wave").innerHTML = out;
```
